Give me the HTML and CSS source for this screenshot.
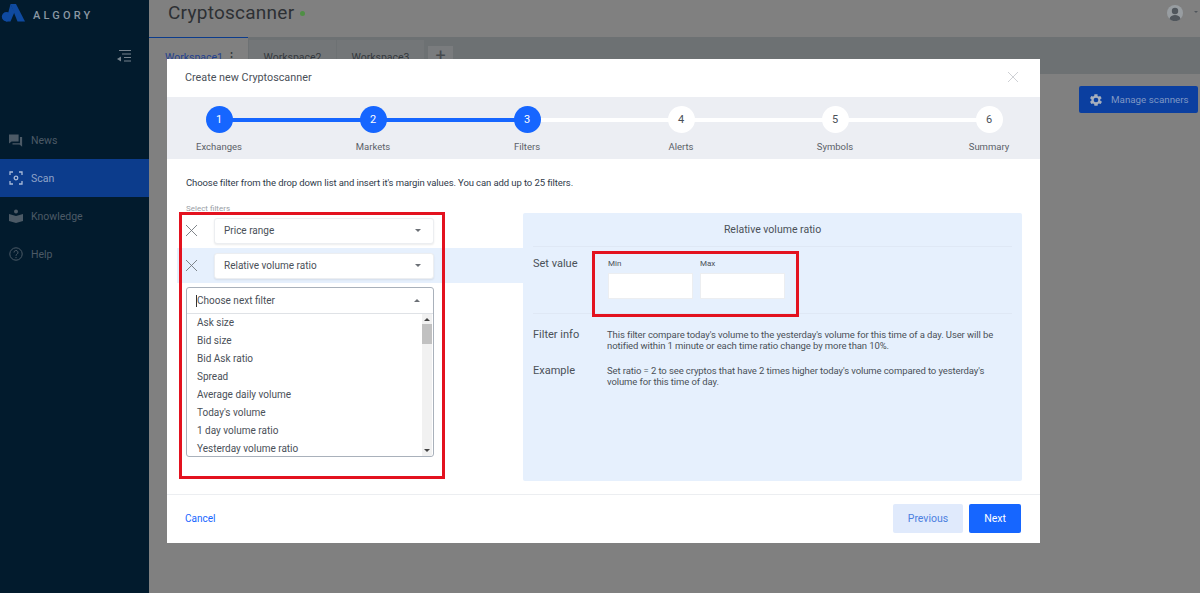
FILE: index.html
```html
<!DOCTYPE html>
<html lang="en">
<head>
    <meta charset="UTF-8">
    <title>Cryptoscanner</title>
    <link rel="stylesheet" href="styles.css">
</head>
<body>
    <div class="sidebar">
        <div class="logo">
            <svg class="logo-mark" viewBox="0 0 24 18" width="24" height="18">
                <path d="M9.500 0h5.500l9 17.500h-7.500z" fill="#0f4aa0"/>
                <path d="M9.500 0l4 8-4 9.500H5z" fill="#0f4aa0"/>
                <circle cx="5.500" cy="12.800" r="4.700" fill="#0f4aa0"/>
            </svg>
            <span>ALGORY</span>
        </div>
        <div class="collapse">
            <svg viewBox="0 0 16 14" width="16" height="14" fill="none" stroke="#75828d" stroke-width="1.2">
                <path d="M3 1.500h12M6 5h9M8 8.500h7M8 12h7"/>
                <path d="M1 10l4-2.500v5z" fill="#75828d" stroke="none"/>
            </svg>
        </div>
        <ul class="nav">
            <li>
                <svg viewBox="0 0 16 14" width="14" height="13" fill="#4c5a66"><path d="M0 0h11v8H3L0 10.500zM12.500 3H15v11l-3-2.500H4V10h8.500z"/></svg>
                News
            </li>
            <li class="active">
                <svg viewBox="0 0 14 14" width="14" height="14" fill="none" stroke="#a9bad8" stroke-width="1.300"><path d="M4 1H1v3M10 1h3v3M4 13H1v-3M10 13h3v-3"/><circle cx="7" cy="7" r="1.800"/></svg>
                Scan
            </li>
            <li>
                <svg viewBox="0 0 14 14" width="14" height="14" fill="#4c5a66"><circle cx="7" cy="2.500" r="2"/><path d="M0 5l7 2 7-2v7l-7 2-7-2z"/></svg>
                Knowledge
            </li>
            <li>
                <svg viewBox="0 0 14 14" width="14" height="14" fill="none" stroke="#4c5a66" stroke-width="1"><circle cx="7" cy="7" r="6.200"/><path d="M5 5.500a2 2 0 1 1 3 1.700c-.7.4-1 .8-1 1.600M7 10v1.200"/></svg>
                Help
            </li>
        </ul>
    </div>

    <div class="main">
        <div class="topbar">
            <div class="page-title">Cryptoscanner <span class="dot"></span></div>
            <div class="user">
                <svg viewBox="0 0 16 16" width="16" height="16"><circle cx="8" cy="8" r="8" fill="#989da1"/><circle cx="8" cy="6" r="3.200" fill="#50565c"/><path d="M2.500 14c.5-3 3-4 5.500-4s5 1 5.500 4a8 8 0 0 1-11 0z" fill="#50565c"/></svg>
                <span class="user-caret"></span>
            </div>
        </div>
        <div class="tabs">
            <div class="tab tab-active">Workspace1 <span class="tab-more">⋮</span></div>
            <div class="tab">Workspace2</div>
            <div class="tab">Workspace3</div>
            <div class="tab-add">+</div>
        </div>
        <div class="toolbar">
            <button class="manage">
                <svg viewBox="0 0 24 24" width="16" height="16" fill="#a7afbd"><path d="M19.400 13a7.500 7.500 0 0 0 0-2l2.100-1.600-2-3.500-2.500 1a7.500 7.500 0 0 0-1.700-1L15.400 3.200h-4.800l-.4 2.700a7.500 7.500 0 0 0-1.700 1l-2.500-1-2 3.500L6.100 11a7.500 7.500 0 0 0 0 2L4 14.600l2 3.500 2.500-1a7.500 7.500 0 0 0 1.700 1l.4 2.700h4.800l.4-2.700a7.500 7.500 0 0 0 1.700-1l2.500 1 2-3.500zM13 15.500a3.500 3.500 0 1 1 0-7 3.500 3.500 0 0 1 0 7z" transform="translate(-1)"/></svg>
                Manage scanners
            </button>
        </div>
    </div>

    <div class="modal">
        <div class="modal-header">
            <span>Create new Cryptoscanner</span>
            <svg viewBox="0 0 10 10" width="10" height="10" stroke="#c9ccd0" stroke-width="0.900"><path d="M0 0l10 10M10 0L0 10"/></svg>
        </div>

        <div class="stepper">
            <div class="step done"><div class="step-num">1</div><div class="step-label">Exchanges</div></div>
            <div class="step done"><div class="step-num">2</div><div class="step-label">Markets</div></div>
            <div class="step current"><div class="step-num">3</div><div class="step-label">Filters</div></div>
            <div class="step"><div class="step-num">4</div><div class="step-label">Alerts</div></div>
            <div class="step"><div class="step-num">5</div><div class="step-label">Symbols</div></div>
            <div class="step last"><div class="step-num">6</div><div class="step-label">Summary</div></div>
        </div>

        <div class="modal-body">
            <p class="intro">Choose filter from the drop down list and insert it's margin values. You can add up to 25 filters.</p>
            <div class="select-label">Select filters</div>

            <div class="filter-row">
                <svg class="remove" viewBox="0 0 10 10" width="11" height="11" stroke="#70757b" stroke-width="0.800"><path d="M0 0l10 10M10 0L0 10"/></svg>
                <div class="select">Price range <span class="caret"></span></div>
            </div>
            <div class="filter-row selected">
                <svg class="remove" viewBox="0 0 10 10" width="11" height="11" stroke="#70757b" stroke-width="0.800"><path d="M0 0l10 10M10 0L0 10"/></svg>
                <div class="select">Relative volume ratio <span class="caret"></span></div>
            </div>

            <div class="dropdown">
                <div class="dropdown-head"><span class="cursor"></span>Choose next filter <span class="caret up"></span></div>
                <div class="dropdown-list">
                    <ul>
                        <li>Ask size</li>
                        <li>Bid size</li>
                        <li>Bid Ask ratio</li>
                        <li>Spread</li>
                        <li>Average daily volume</li>
                        <li>Today's volume</li>
                        <li>1 day volume ratio</li>
                        <li>Yesterday volume ratio</li>
                    </ul>
                    <div class="scrollbar">
                        <span class="arrow"></span>
                        <div class="thumb"></div>
                        <span class="arrow down"></span>
                    </div>
                </div>
            </div>

            <div class="detail">
                <div class="detail-title">Relative volume ratio</div>
                <div class="detail-row values">
                    <div class="detail-name">Set value</div>
                    <div class="inputs">
                        <div class="field"><label>Min</label><div class="input"></div></div>
                        <div class="field"><label>Max</label><div class="input"></div></div>
                    </div>
                </div>
                <div class="detail-row info">
                    <div class="detail-name">Filter info</div>
                    <div class="detail-text">This filter compare today's volume to the yesterday's volume for this time of a day. User will be notified within 1 minute or each time ratio change by more than 10%.</div>
                </div>
                <div class="detail-row">
                    <div class="detail-name">Example</div>
                    <div class="detail-text">Set ratio = 2 to see cryptos that have 2 times higher today's volume compared to yesterday's volume for this time of day.</div>
                </div>
            </div>

            <div class="mark mark-filters"></div>
            <div class="mark mark-values"></div>
        </div>

        <div class="modal-footer">
            <a class="cancel">Cancel</a>
            <div class="footer-buttons">
                <button class="btn-prev">Previous</button>
                <button class="btn-next">Next</button>
            </div>
        </div>
    </div>
</body>
</html>
```

FILE: styles.css
```css
* {
    margin: 0;
    padding: 0;
    box-sizing: border-box;
    font-family: Roboto, "Liberation Sans", sans-serif;
}

html, body {
    height: 100%;
    overflow: hidden;
}

body {
    display: flex;
    background-color: #808080;
    color: #4a5058;
}

/* sidebar */
.sidebar {
    width: 149px;
    flex-shrink: 0;
    background-color: #021b2d;
}

.logo {
    display: flex;
    align-items: center;
    height: 30px;
    font-size: 11px;
    font-weight: 500;
    letter-spacing: 3.200px;
    color: #8b98a3;
    gap: 8px;
}

.logo-mark {
    flex-shrink: 0;
    margin-left: 1px;
    margin-top: -4px;
}

.collapse {
    display: flex;
    justify-content: flex-end;
    padding: 19px 17px 0 0;
}

.nav {
    list-style: none;
    margin-top: 58px;
}

.nav li {
    display: flex;
    align-items: center;
    gap: 8px;
    height: 38px;
    padding-left: 9px;
    font-size: 10.500px;
    color: #4c5a66;
}

.nav li.active {
    background-color: #0c3c8c;
    color: #8fa3c8;
}

/* page behind the modal */
.main {
    flex: 1;
    display: flex;
    flex-direction: column;
}

.topbar {
    display: flex;
    justify-content: space-between;
    align-items: center;
    height: 37px;
    padding: 0 2px 12px 19px;
}

.page-title {
    font-size: 19px;
    letter-spacing: 0.250px;
    color: #2d3034;
}

.dot {
    display: inline-block;
    width: 5px;
    height: 5px;
    margin-left: 1px;
    border-radius: 50%;
    background-color: #4f8f45;
    vertical-align: middle;
}

.user {
    display: flex;
    align-items: center;
    gap: 11px;
}

.user-caret {
    width: 0;
    height: 0;
    border: 2px solid transparent;
    border-top: 2px solid #50565c;
}

.tabs {
    display: flex;
    align-items: flex-start;
    height: 37px;
    background-color: #6d7173;
    gap: 1px;
}

.tab {
    width: 87px;
    height: 34px;
    margin-top: 3px;
    padding-top: 11px;
    text-align: center;
    font-size: 10.500px;
    background-color: #737678;
    color: #33383d;
}

.tab-active {
    width: 99px;
    height: 37px;
    margin: 0;
    padding: 11px 0 0 16px;
    background-color: #808080;
    border-top: 1.500px solid #0c3c8c;
    color: #1f3f8f;
    text-align: left;
}

.tab-more {
    margin-left: -1px;
    font-size: 13px;
    color: #33383d;
}

.tab-add {
    width: 25px;
    height: 20px;
    margin: 9px 0 0 3px;
    text-align: center;
    font-size: 18px;
    line-height: 20px;
    background-color: #7a7c7e;
    color: #45494d;
}

.toolbar {
    display: flex;
    justify-content: flex-end;
    padding: 12px 2px 0 0;
}

.manage {
    display: flex;
    align-items: center;
    gap: 7px;
    width: 119px;
    height: 27px;
    padding-left: 9px;
    border: none;
    border-radius: 2px;
    background-color: #0b3fa0;
    color: #7f97c4;
    font-size: 9.800px;
}

/* modal */
.modal {
    position: fixed;
    top: 59px;
    left: 167px;
    width: 873px;
    height: 484px;
    display: flex;
    flex-direction: column;
    background: #fff;
}

.modal-header {
    display: flex;
    justify-content: space-between;
    align-items: center;
    height: 38px;
    padding: 0 22px 2px 18px;
    font-size: 10.800px;
    color: #4a5058;
}

.stepper {
    display: flex;
    justify-content: space-between;
    height: 62px;
    padding: 9px 21px 0 22px;
    background-color: #eceef3;
}

.step {
    position: relative;
    width: 60px;
    text-align: center;
}

.step::after {
    content: "";
    position: absolute;
    top: 12px;
    left: 30px;
    width: 154px;
    height: 4px;
    background-color: #fff;
}

.step.done::after {
    background-color: #1666ff;
}

.step.last::after {
    display: none;
}

.step-num {
    position: relative;
    z-index: 1;
    width: 27px;
    height: 27px;
    margin: 0 auto;
    border-radius: 50%;
    background-color: #fff;
    font-size: 11px;
    line-height: 27px;
    color: #4a5058;
}

.done .step-num, .current .step-num {
    background-color: #1666ff;
    color: #fff;
}

.step-label {
    margin-top: 8px;
    font-size: 9.500px;
    color: #5b6168;
}

.modal-body {
    position: relative;
    flex: 1;
    padding: 18px 18px 0 19px;
    border-bottom: 1px solid #eceef1;
}

.intro {
    font-size: 9.500px;
    letter-spacing: -0.100px;
    color: #2f3a4a;
}

.select-label {
    margin-top: 16px;
    font-size: 8px;
    color: #9aa0a6;
}

.filter-row {
    display: flex;
    align-items: center;
    width: 346px;
    height: 35px;
    margin-left: -9px;
    padding-left: 9px;
    gap: 17px;
}

.selected {
    background-color: #e6f0fd;
}

.remove {
    flex-shrink: 0;
}

.select {
    display: flex;
    justify-content: space-between;
    align-items: center;
    width: 220px;
    height: 26px;
    padding: 0 12px 0 9px;
    background: #fff;
    border: 1px solid #eceef1;
    border-radius: 3px;
    box-shadow: 0 1px 2px rgba(0, 0, 0, 0.08);
    font-size: 10px;
}

.caret {
    width: 0;
    height: 0;
    border: 3px solid transparent;
    border-top: 3px solid #6c7076;
    margin-top: 3px;
}

.caret.up {
    border-top: none;
    border-bottom: 3px solid #6c7076;
    margin-top: 0;
}

.dropdown {
    width: 248px;
    height: 170px;
    margin-top: 4px;
    border: 1px solid #a9b1bb;
    border-radius: 3px;
    overflow: hidden;
}

.dropdown-head {
    display: flex;
    align-items: center;
    height: 26px;
    padding-right: 13px;
    padding-left: 9px;
    border-bottom: 1px solid #dfe2e6;
    font-size: 10px;
}

.dropdown-head .caret {
    margin-left: auto;
}

.cursor {
    width: 1px;
    height: 12px;
    background-color: #333;
}

.dropdown-list {
    display: flex;
    height: 142px;
}

.dropdown-list ul {
    flex: 1;
    list-style: none;
    padding-left: 10px;
}

.dropdown-list li {
    height: 18px;
    line-height: 18px;
    font-size: 10px;
}

.scrollbar {
    display: flex;
    flex-direction: column;
    align-items: center;
    width: 10px;
    background-color: #f1f1f1;
    margin-right: 1px;
}

.arrow {
    width: 0;
    height: 0;
    margin: 4px 0 3px;
    border: 3px solid transparent;
    border-top: none;
    border-bottom: 3px solid #444;
}

.arrow.down {
    margin: auto 0 4px;
    border: 3px solid transparent;
    border-bottom: none;
    border-top: 3px solid #444;
}

.thumb {
    width: 100%;
    height: 20px;
    background-color: #c1c1c1;
}

.detail {
    position: absolute;
    top: 54px;
    left: 356px;
    width: 499px;
    height: 268px;
    padding: 0 10px;
    background-color: #e6f0fd;
    border-radius: 2px;
}

.detail-title {
    height: 34px;
    line-height: 34px;
    text-align: center;
    font-size: 10.500px;
    border-bottom: 1px solid #dfe8f5;
}

.detail-row {
    display: flex;
    margin-top: 13px;
    font-size: 11px;
}

.detail-row.values {
    height: 67px;
    margin: 0;
    padding-top: 10px;
    border-bottom: 1px solid #dfe8f5;
}

.detail-row.info {
    margin-top: 14px;
}

.detail-name {
    width: 75px;
    flex-shrink: 0;
}

.detail-text {
    font-size: 9.500px;
    letter-spacing: -0.100px;
    line-height: 11px;
    padding-top: 1px;
    margin-left: -1px;
}

.inputs {
    display: flex;
    gap: 7px;
}

.field label {
    display: block;
    font-size: 8px;
    margin: 2px 0 5px;
}

.input {
    width: 85px;
    height: 26px;
    background: #fff;
    border: 1px solid #eceef1;
}

/* red annotations on top of the screenshot */
.mark {
    position: absolute;
    border: 3px solid #e3121f;
}

.mark-filters {
    top: 53px;
    left: 12px;
    width: 266px;
    height: 267px;
}

.mark-values {
    top: 92px;
    left: 425px;
    width: 207px;
    height: 66px;
}

.modal-footer {
    display: flex;
    justify-content: space-between;
    align-items: center;
    height: 48px;
    padding: 0 19px 2px 18px;
}

.cancel {
    margin-top: 1px;
    font-size: 10px;
    color: #1666ff;
}

.footer-buttons {
    display: flex;
    gap: 6px;
}

.footer-buttons button {
    height: 29px;
    border: none;
    border-radius: 2px;
    font-size: 10.500px;
}

.btn-prev {
    width: 70px;
    background-color: #e0eafc;
    color: #4c7fe0;
}

.btn-next {
    width: 52px;
    background-color: #1666ff;
    color: #fff;
}
```
